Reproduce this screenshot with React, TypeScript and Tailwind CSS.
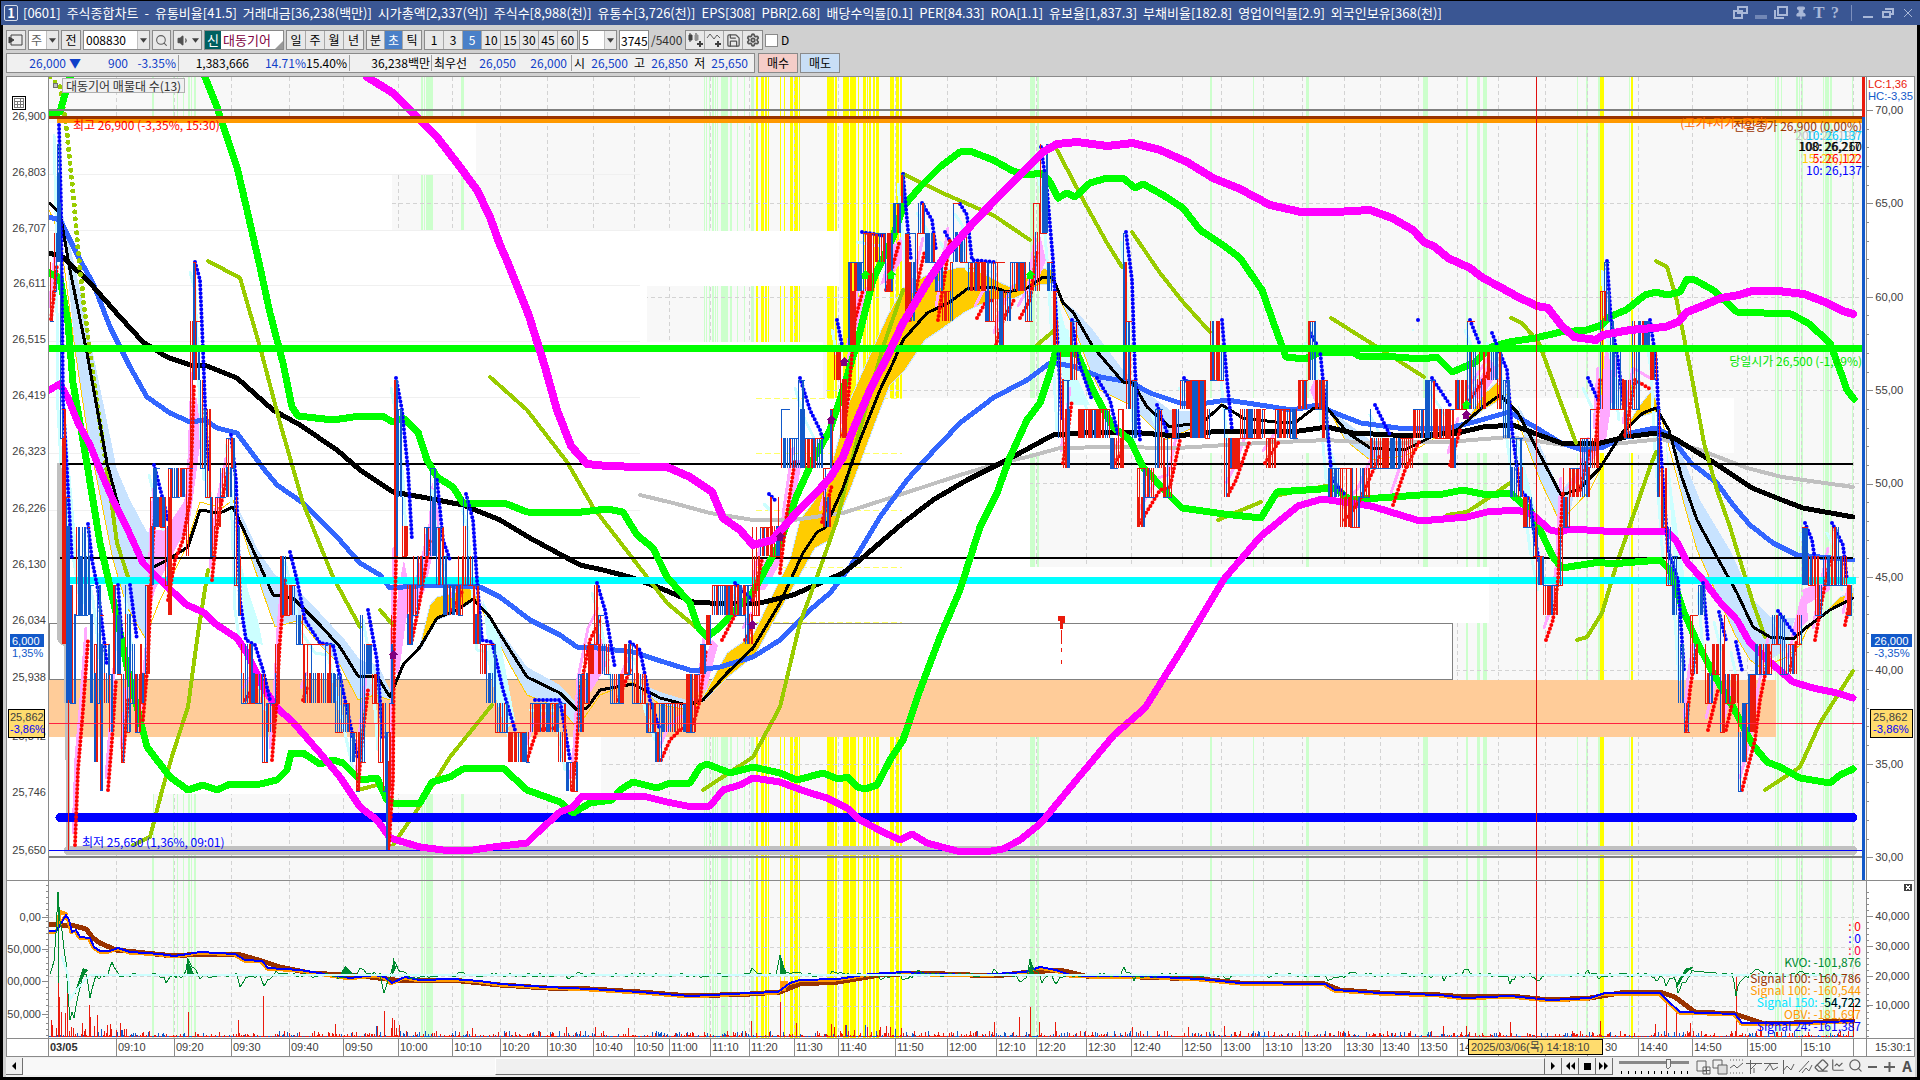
import { ReactNode } from "react";
import {
  Search,
  Volume1,
  Save,
  Settings,
  Pin,
  Eraser,
  ChartLine,
} from "lucide-react";

const FONT = "font-['Noto_Sans_CJK_KR',sans-serif]";
const AXIS_FONT = "font-['Liberation_Sans','Noto_Sans_CJK_KR',sans-serif] text-[11px]";

const TITLE = [
  "[0601]", "주식종합차트", "-", "유통비율[41.5]", "거래대금[36,238(백만)]", "시가총액[2,337(억)]",
  "주식수[8,988(천)]", "유통수[3,726(천)]", "EPS[308]", "PBR[2.68]", "배당수익률[0.1]", "PER[84.33]",
  "ROA[1.1]", "유보율[1,837.3]", "부채비율[182.8]", "영업이익률[2.9]", "외국인보유[368(천)]",
];

const RED = "#ea1a0c";
const BLUE = "#1259c9";
const GREEN = "#00ff00";
const MAGENTA = "#ff00ff";
const OLIVE = "#99cc00";

// small seeded generator so the chart is the same on every render
function seeded(seed: number) {
  let s = seed;
  return () => {
    s = (s * 1664525 + 1013904223) % 4294967296;
    return s / 4294967296;
  };
}

// ---------- shared x axis ----------
const TIMES: [number, string][] = [
  [116, "09:10"], [174, "09:20"], [231, "09:30"], [289, "09:40"], [343, "09:50"], [398, "10:00"], [452, "10:10"],
  [500, "10:20"], [547, "10:30"], [593, "10:40"], [634, "10:50"], [669, "11:00"], [710, "11:10"], [749, "11:20"],
  [794, "11:30"], [838, "11:40"], [895, "11:50"], [947, "12:00"], [996, "12:10"], [1036, "12:20"], [1086, "12:30"],
  [1131, "12:40"], [1182, "12:50"], [1221, "13:00"], [1263, "13:10"], [1302, "13:20"], [1344, "13:30"],
  [1380, "13:40"], [1418, "13:50"], [1457, "14"], [1498, ""], [1545, ""], [1587, ""], [1638, "14:40"],
  [1692, "14:50"], [1747, "15:00"], [1801, "15:10"], [1853, ""],
];

const LIGHT_STRIPES: [number, number][] = [
  [152, 2], [173, 1], [177, 1], [183, 1], [188, 2], [191, 1], [194, 2], [421, 2], [424, 1], [426, 7], [461, 3],
  [704, 1], [706, 1], [709, 1], [712, 2], [715, 1], [717, 1], [721, 7], [730, 2], [737, 1], [744, 1], [751, 3],
  [1030, 5], [1037, 2], [1210, 2], [1253, 1], [1306, 3], [1423, 5], [1466, 2], [1477, 3], [1483, 4], [1577, 1],
  [1586, 2], [1598, 2], [1629, 1], [1775, 1], [1777, 2], [1781, 1], [1796, 2], [1799, 1], [1801, 2], [1823, 1],
  [1825, 4], [1830, 2], [1852, 1],
];

const YELLOW_STRIPES: [number, number][] = [
  [756, 2], [761, 3], [765, 2], [768, 1], [780, 1], [784, 1], [790, 3], [794, 4], [799, 1], [827, 7], [835, 2],
  [843, 6], [850, 6], [858, 1], [863, 3], [867, 1], [869, 2], [873, 2], [876, 3], [890, 4], [896, 3], [900, 2],
  [1600, 4], [1631, 2],
];

function Stripes({ top, height }: { top: number; height: number }) {
  return (
    <g>
      {LIGHT_STRIPES.map(([x, w]) => (
        <rect key={x} x={x} y={top} width={w} height={height} fill="#ccffcc" />
      ))}
      {YELLOW_STRIPES.map(([x, w]) => (
        <rect key={x} x={x} y={top} width={w} height={height} fill="#ffff00" />
      ))}
    </g>
  );
}

function Grid({ top, bottom, rows }: { top: number; bottom: number; rows: number[] }) {
  return (
    <g stroke="#d3d3d3" strokeDasharray="4 3">
      {TIMES.map(([x]) => (
        <line key={x} x1={x + 0.5} x2={x + 0.5} y1={top} y2={bottom} />
      ))}
      {rows.map((y) => (
        <line key={y} x1={49} x2={1862} y1={y + 0.5} y2={y + 0.5} />
      ))}
    </g>
  );
}

// ---------- price panel data ----------
const PROFILE: [number, number, number][] = [
  [123, 51, 476], [174, 57, 392], [231, 55, 839], [286, 56, 647], [342, 56, 823], [398, 55, 1734], [453, 57, 1030],
  [510, 57, 1030], [567, 56, 1489], [737, 57, 601], [794, 56, 153],
];

const MAGENTA_UPPER =
  "367,77 393,93 420,120 437,137 457,163 477,190 490,217 500,245 508,263 529,316 545,367 557,410 571,446 587,464 607,466 640,467 667,467 690,477 712,492 723,518 740,530 753,545 772,540 783,528 797,512 817,492 830,478 843,457 853,430 870,390 887,357 903,323 927,283 947,253 973,223 1000,195 1027,168 1043,152 1057,144 1077,142 1107,146 1133,143 1160,150 1187,162 1213,178 1240,189 1270,205 1301,212 1335,212 1370,210 1392,218 1413,230 1424,242 1435,247 1448,258 1470,268 1483,278 1500,287 1518,297 1537,306 1548,308 1561,325 1574,337 1596,340 1603,335 1630,330 1665,327 1678,322 1687,312 1700,307 1721,298 1739,295 1752,291 1778,291 1804,294 1825,302 1843,311 1853,314";

const MAGENTA_LOWER =
  "49,390 60,384 68,398 78,423 90,445 100,470 113,500 127,528 143,563 160,580 187,605 203,612 217,625 237,638 247,653 263,687 277,708 293,722 320,753 340,777 360,807 377,820 390,838 420,847 443,850 473,850 493,847 527,843 537,833 560,812 573,807 582,796 607,797 643,796 667,802 687,806 710,806 723,790 740,785 753,778 780,782 807,792 827,798 847,808 860,820 883,832 900,840 912,834 927,843 957,851 985,852 1003,849 1020,840 1041,823 1078,778 1114,735 1145,708 1182,649 1224,579 1261,536 1298,506 1322,499 1371,506 1420,521 1467,517 1487,512 1517,510 1533,515 1550,530 1560,532 1570,529 1620,532 1667,531 1677,542 1687,562 1703,580 1720,602 1737,620 1750,643 1770,662 1793,682 1813,688 1837,693 1853,698";

const GREEN_UPPER =
  "205,77 217,107 227,137 237,167 247,210 260,267 270,313 283,363 292,407 298,416 333,420 360,416 382,416 393,422 403,418 418,432 427,460 437,477 453,487 463,503 507,504 527,512 573,513 607,509 623,512 637,535 653,548 667,577 690,603 698,627 707,637 720,627 737,608 753,592 780,543 797,495 813,460 830,430 843,390 857,343 873,280 893,237 903,207 920,187 940,167 960,152 970,151 993,160 1013,171 1027,175 1042,173 1050,182 1058,198 1067,193 1075,197 1090,183 1107,178 1123,178 1135,188 1143,184 1163,195 1183,208 1200,230 1223,245 1240,258 1262,290 1275,327 1286,357 1305,359 1318,353 1353,352 1359,356 1396,357 1422,359 1437,357 1452,372 1474,363 1491,347 1509,342 1535,338 1561,332 1587,330 1602,325 1609,317 1626,310 1645,295 1656,292 1667,295 1680,292 1687,279 1695,280 1713,290 1737,312 1791,314 1808,323 1830,343 1841,373 1847,390 1854,399";

const GREEN_LOWER =
  "49,273 60,278 68,323 73,383 80,423 88,470 100,543 117,617 127,667 147,747 170,777 188,790 203,785 217,790 230,784 260,784 277,780 287,770 291,753 303,753 320,764 333,760 343,763 360,780 377,778 387,800 393,803 420,803 432,782 450,777 463,769 503,768 527,790 560,802 573,813 590,803 612,800 620,790 633,782 657,788 670,783 690,783 700,767 707,764 730,773 753,767 780,773 797,780 823,773 838,779 848,777 857,787 865,789 877,785 890,760 903,740 920,690 940,637 960,590 980,527 997,493 1010,457 1027,420 1040,403 1050,373 1055,353 1077,353 1093,390 1113,427 1130,440 1143,467 1167,493 1182,508 1224,514 1261,518 1277,492 1335,488 1350,500 1420,495 1443,494 1463,490 1487,495 1510,493 1530,510 1540,530 1553,557 1562,568 1600,562 1610,564 1660,560 1670,570 1683,610 1697,642 1713,673 1733,707 1753,745 1767,762 1780,767 1800,778 1830,783 1840,775 1853,769";

const BLUE_MA =
  "49,217 60,220 80,260 93,283 110,327 130,367 147,397 170,413 190,422 205,420 217,428 237,433 263,468 277,485 303,503 337,537 360,563 380,575 390,588 430,585 480,587 500,597 530,620 560,635 577,647 597,648 633,652 667,663 693,671 720,667 753,657 780,640 810,610 830,593 850,567 880,517 907,480 923,462 960,423 993,398 1027,380 1050,363 1073,366 1100,377 1130,382 1150,393 1180,403 1207,403 1227,400 1260,405 1292,410 1318,405 1335,413 1361,423 1405,429 1448,428 1474,422 1509,412 1535,427 1561,443 1583,450 1604,447 1630,433 1656,428 1669,435 1691,463 1717,483 1733,505 1750,525 1773,543 1797,555 1820,557 1853,560";

const BLACK_SLOW =
  "49,253 63,257 90,283 120,317 143,342 167,357 190,365 207,366 237,378 273,410 300,425 337,450 360,470 393,492 427,498 463,505 500,520 530,538 580,565 603,570 630,577 660,588 693,602 727,604 760,603 793,595 843,573 860,560 903,523 933,500 967,480 1007,460 1053,435 1093,432 1130,432 1177,436 1220,431 1260,431 1292,432 1327,427 1353,433 1413,436 1457,433 1483,427 1513,425 1539,435 1561,443 1596,444 1626,437 1656,433 1674,438 1713,462 1752,488 1782,500 1803,508 1853,517";

const BLACK_FAST =
  "49,203 60,213 70,270 87,353 107,463 123,523 143,563 152,568 167,560 188,547 200,510 220,513 233,507 253,550 273,595 293,598 320,625 340,647 358,676 377,676 390,697 403,665 420,647 437,618 457,610 473,599 490,617 500,634 527,677 560,693 577,710 587,708 600,690 633,684 660,698 687,705 703,700 727,673 753,648 780,603 803,553 817,532 825,528 843,488 860,440 880,390 893,363 903,340 927,313 950,302 967,289 993,287 1007,292 1027,288 1043,277 1053,278 1063,303 1073,312 1093,347 1123,382 1133,383 1147,407 1170,427 1203,422 1222,405 1243,418 1283,423 1296,422 1314,408 1327,408 1348,433 1370,448 1405,450 1431,437 1457,430 1483,407 1500,395 1518,413 1539,453 1561,495 1578,490 1600,468 1622,433 1643,413 1656,408 1669,430 1681,475 1697,520 1717,557 1737,593 1753,627 1770,637 1793,639 1807,627 1830,610 1853,598";

const GRAY_MA =
  "640,495 673,503 710,513 753,520 793,520 843,513 893,497 960,475 1000,463 1027,457 1060,448 1110,447 1177,448 1260,443 1327,440 1370,443 1448,442 1509,437 1543,442 1570,446 1604,445 1661,439 1700,450 1747,468 1782,477 1853,487";

const OLIVE_LINES = [
  "107,470 117,543 130,583",
  "208,261 240,278 260,347 280,423 303,503 333,577 360,627",
  "133,845 150,837 163,787 173,753 188,707 197,640 208,570",
  "380,610 393,625",
  "358,790 377,785",
  "393,845 417,810 450,757 492,705",
  "490,377 527,410 567,462 593,507 647,577 667,603 703,633",
  "703,790 753,757 780,707 800,623 817,577 837,520 857,440 883,347 903,290",
  "903,174 947,195 993,215 1030,240",
  "1037,345 1055,330",
  "1057,150 1087,207 1107,243 1122,267",
  "1132,232 1160,273 1183,302 1210,332",
  "1218,520 1261,502",
  "1331,318 1374,345 1424,377",
  "1279,495 1331,485",
  "1447,515 1467,512 1490,497 1510,483",
  "1511,318 1522,323 1539,343 1561,403 1576,443",
  "1577,640 1587,637 1602,613 1617,563 1650,467 1656,452",
  "1656,261 1667,267 1676,297 1691,373 1704,443 1717,490 1730,527 1753,603 1765,637",
  "1765,790 1800,767 1820,723 1853,671",
];

const SKY_BANDS = [
  "62,210 80,290 117,470 130,500 147,532 188,530 165,562 152,570 145,638 127,607 113,560 97,480 87,430 75,350",
  "237,505 258,550 275,575 293,585 320,613 345,640 360,660 378,665 390,690 390,700 375,695 358,700 340,665 320,645 300,620 275,627 262,590 250,555",
  "480,600 500,630 527,667 560,685 583,710 577,728 560,708 527,695 510,665 490,625",
  "633,680 660,692 690,701 690,710 660,705",
  "1060,300 1075,310 1093,330 1123,370 1150,395 1170,410 1200,412 1190,430 1165,440 1150,425 1130,405 1100,390 1090,370 1075,330",
  "1327,408 1350,425 1370,440 1405,445 1405,455 1370,460 1345,440",
  "1518,405 1540,445 1555,480 1562,490 1578,470 1570,515 1560,522 1540,480 1525,440",
  "1669,430 1680,450 1700,500 1730,550 1753,600 1770,617 1795,618 1785,650 1760,667 1750,660 1735,635 1715,590 1697,550 1683,500",
];

const CYAN_BANDS = [
  "63,380 70,470 76,540 86,600 80,610 66,520",
  "200,400 207,420 212,500 206,500",
  "240,560 248,590 258,620 263,645 245,640",
  "483,600 500,640 515,720 505,730 490,670",
  "1055,290 1066,330 1078,380 1090,405 1065,405",
  "1325,430 1335,460 1342,490 1332,490",
  "1515,430 1528,480 1538,520 1528,520",
  "1665,430 1673,500 1685,580 1676,590",
];

const PINK_BANDS = [
  "148,620 152,530 165,530 185,500 190,440 196,395 202,430 190,520 170,560 155,590",
  "394,660 398,590 404,560 412,600 406,620 398,680",
  "410,600 428,530 432,480 440,520 425,590 412,615",
  "580,710 592,660 598,630 610,660 598,680",
  "698,690 706,655 712,640 718,645 706,690",
  "755,590 765,560 780,545 782,560 765,590",
  "784,520 796,460 802,460 792,520",
  "846,345 856,300 868,285 868,310 856,330 850,360",
  "880,285 895,245 902,235 902,260 890,280",
  "1030,280 1040,235 1046,260 1036,285",
  "1310,390 1316,375 1322,385 1318,410",
  "1470,395 1490,360 1500,370 1480,400",
  "1565,490 1580,470 1598,440 1605,350 1618,360 1606,440 1580,480",
  "1790,640 1800,600 1806,590 1808,620",
  "1802,590 1820,582 1830,560 1830,590 1806,605",
];

const GOLD_EDGES = [
  "49,210 60,235 75,350 87,430 97,480 113,560 127,607 145,638 160,600 185,550 200,502 222,508 233,500 250,555 262,590 275,627 300,620 320,645 340,665 358,700 375,695 390,700",
  "475,597 490,625 510,665 527,695 560,708 577,728 600,695 633,682 660,705 690,710 703,700",
  "1060,300 1075,330 1090,370 1100,390 1130,405 1150,425 1165,440 1200,425 1222,403",
  "1327,405 1345,440 1370,460 1405,456 1440,435",
  "1508,395 1525,440 1540,480 1560,522 1590,490 1610,450",
  "1658,405 1683,500 1697,550 1715,590 1735,635 1750,660 1760,667 1785,658 1800,645 1807,630 1825,612",
];

const GOLD_BANDS = [
  "420,645 430,605 437,597 457,592 470,583 477,598 457,612 437,620 420,650",
  "703,697 727,653 753,635 770,600 790,560 800,520 815,500 830,470 850,400 870,355 887,317 903,288 927,275 960,267 973,267 995,280 1010,287 1030,275 1045,268 1055,270 1055,283 1040,285 1015,298 990,300 965,312 940,330 925,340 905,370 890,385 880,410 865,450 850,490 830,540 815,548 800,575 780,610 755,655 727,678 703,702",
  "1457,432 1470,415 1483,395 1497,382 1508,395 1500,400 1483,410",
  "1622,433 1640,405 1652,390 1658,405 1656,412 1640,417",
  "1825,612 1840,597 1853,592 1853,600 1830,610",
];

const FALLING = [
  "59,125 61,204 63,400 72,560", "88,524 92,560 98,590 107,665", "118,585 122,640", "130,585 137,640",
  "154,465 163,500 168,520", "195,262 200,280 203,350 206,430 209,470",
  "231,435 236,480 240,600 246,640 255,645 263,670 270,700",
  "290,552 297,580 305,620 320,643 333,645 345,700 358,760", "368,610 377,660 383,740",
  "396,378 402,410 408,470 412,540", "437,480 443,540 450,560",
  "466,494 473,520 477,580 482,640 492,642 503,690 515,730", "535,700 560,700 570,760",
  "597,583 605,610 615,668", "630,642 640,650 650,700 660,730", "735,583 752,600", "769,494 775,500",
  "800,378 810,410 820,430 823,440", "837,320 843,350", "862,232 885,236", "903,174 907,220 911,260",
  "922,203 932,220 936,250", "945,232 955,250", "960,204 967,215 972,260 995,262", "1041,147 1047,190 1053,260 1062,420",
  "1072,320 1078,360 1092,400", "1097,378 1110,400 1118,435", "1126,232 1132,280 1135,370 1140,440",
  "1157,405 1168,435", "1184,378 1203,400", "1222,320 1227,380 1232,430", "1310,333 1320,350 1325,400 1332,480 1345,495",
  "1375,405 1390,435", "1432,378 1450,405", "1418,320 1418,320", "1470,320 1480,345", "1492,333 1507,370 1512,430 1520,490 1530,500 1535,540 1543,580",
  "1588,378 1598,400", "1607,261 1611,320 1618,360 1624,410", "1650,320 1656,360 1660,440 1668,550 1678,580 1684,670",
  "1703,583 1708,640", "1719,612 1726,640", "1736,642 1742,670", "1778,611 1795,635", "1805,523 1812,540 1815,560",
  "1832,523 1843,545 1847,580",
];

const RISING = [
  "51,319 54,295 57,265", "75,845 78,770 83,710 88,640", "108,790 112,740 116,680", "123,760 128,700",
  "143,720 148,660 153,540 156,500", "168,600 175,560 183,540 190,500 194,385", "212,580 218,520 228,470",
  "245,700 253,688", "272,760 276,710 280,640 285,580", "303,700 308,685", "358,790 362,740 368,690",
  "389,845 393,780 394,640 396,560", "412,640 420,600 430,540", "452,610 463,590", "527,760 537,730 555,728",
  "572,790 576,760 580,690 590,640 600,620", "618,700 630,670", "661,760 670,740 680,730 693,725 700,700 706,650",
  "722,640 735,615", "745,640 753,625", "753,600 762,560", "780,573 786,520 795,460", "822,522 832,485",
  "843,435 848,400 855,320 863,290", "886,290 900,240", "910,320 918,280 925,250", "938,320 950,240",
  "977,318 985,303 993,300", "996,345 1003,320 1015,298", "1020,318 1030,300 1037,250", "1063,463 1068,430 1072,400",
  "1115,463 1123,450", "1140,523 1160,490 1170,487 1180,440", "1228,495 1236,480 1250,440", "1265,463 1280,440",
  "1345,520 1360,500 1380,455", "1393,505 1405,470 1420,440", "1450,465 1460,430", "1470,400 1490,370",
  "1546,640 1553,620 1558,580 1563,490", "1580,490 1590,450", "1596,440 1600,380", "1625,435 1635,380 1652,390",
  "1686,730 1690,690 1696,650", "1708,730 1718,690", "1726,730 1733,700", "1742,790 1755,740 1760,700 1770,650",
  "1790,670 1797,640", "1815,640 1822,600 1830,560", "1845,625 1851,595",
];

// x, top and bottom of the traded range
const RANGE: [number, number, number][] = [
  [50, 260, 318], [54, 230, 300], [57, 147, 260], [60, 215, 430], [62, 410, 640], [66, 490, 690], [70, 600, 700],
  [76, 525, 610], [88, 524, 610], [90, 580, 700], [94, 640, 760], [97, 580, 700], [100, 610, 790], [104, 640, 700],
  [109, 670, 730], [113, 580, 670], [117, 610, 670], [121, 660, 760], [125, 580, 730], [130, 640, 700],
  [135, 670, 730], [140, 640, 700], [145, 580, 670], [150, 495, 580], [153, 465, 520], [160, 495, 525],
  [165, 495, 580], [168, 465, 610], [172, 465, 495], [180, 465, 495], [186, 465, 550], [190, 318, 465],
  [193, 262, 378], [196, 318, 378], [200, 378, 465], [205, 405, 495], [210, 495, 550], [215, 495, 525],
  [220, 465, 495], [226, 435, 495], [231, 435, 470], [234, 465, 580], [238, 520, 610], [241, 640, 700],
  [247, 640, 700], [255, 670, 700], [262, 670, 760], [268, 700, 730], [275, 640, 700], [280, 550, 610],
  [285, 550, 610], [290, 580, 610], [296, 610, 640], [303, 640, 700], [325, 640, 700], [335, 670, 730],
  [343, 700, 730], [350, 730, 760], [356, 730, 790], [360, 611, 760], [366, 640, 670], [372, 670, 700],
  [378, 670, 760], [383, 700, 800], [386, 740, 850], [389, 700, 790], [391, 610, 700], [394, 378, 560],
  [398, 405, 490], [402, 495, 550], [407, 580, 640], [413, 550, 610], [418, 553, 583], [424, 523, 553],
  [430, 465, 553], [436, 525, 583], [443, 553, 610], [450, 580, 610], [458, 550, 610], [463, 494, 580],
  [468, 550, 583], [473, 580, 640], [480, 640, 670], [486, 640, 700], [495, 700, 730], [500, 700, 730],
  [508, 730, 760], [526, 730, 760], [530, 700, 730], [550, 700, 730], [558, 700, 760], [566, 760, 790],
  [572, 760, 790], [578, 670, 730], [584, 640, 700], [590, 640, 670], [594, 583, 640], [598, 620, 670],
  [604, 640, 670], [610, 670, 700], [618, 670, 700], [624, 640, 670], [632, 640, 700], [640, 670, 700],
  [646, 700, 730], [655, 700, 760], [662, 700, 730], [675, 700, 730], [686, 670, 730], [695, 670, 700],
  [700, 640, 670], [706, 610, 640], [712, 583, 611], [735, 583, 611], [745, 583, 640], [752, 523, 611],
  [760, 523, 553], [770, 493, 553], [778, 493, 553], [781, 405, 463], [790, 435, 463], [798, 378, 463],
  [805, 435, 463], [815, 435, 463], [823, 463, 523], [830, 405, 463], [834, 350, 375], [840, 350, 435],
  [848, 260, 350], [855, 260, 290], [863, 232, 290], [875, 232, 260], [885, 232, 290], [893, 203, 232],
  [901, 174, 203], [905, 232, 320], [915, 232, 290], [918, 203, 232], [925, 232, 260], [935, 260, 290],
  [942, 290, 320], [950, 260, 320], [953, 203, 260], [960, 232, 260], [968, 260, 290], [975, 260, 300],
  [985, 260, 320], [995, 260, 345], [1005, 290, 320], [1010, 260, 290], [1025, 260, 320], [1033, 203, 290],
  [1040, 150, 232], [1047, 260, 290], [1053, 290, 350], [1058, 350, 435], [1063, 378, 463], [1070, 318, 380],
  [1078, 405, 435], [1103, 405, 435], [1110, 435, 463], [1118, 405, 463], [1123, 232, 380], [1126, 320, 405],
  [1132, 378, 435], [1137, 463, 523], [1145, 463, 500], [1155, 405, 463], [1163, 435, 495], [1172, 405, 435],
  [1180, 378, 405], [1190, 378, 435], [1205, 405, 435], [1210, 320, 378], [1217, 318, 378], [1224, 405, 495],
  [1230, 435, 463], [1240, 405, 435], [1262, 405, 435], [1266, 435, 463], [1275, 405, 435], [1290, 405, 435],
  [1298, 378, 405], [1308, 332, 378], [1315, 378, 405], [1322, 378, 435], [1328, 463, 495], [1340, 463, 523],
  [1350, 463, 523], [1360, 463, 495], [1370, 407, 463], [1380, 435, 463], [1400, 435, 463], [1413, 405, 435],
  [1425, 378, 435], [1435, 405, 435], [1450, 405, 463], [1455, 378, 405], [1467, 318, 405], [1475, 350, 405],
  [1487, 350, 380], [1497, 350, 405], [1503, 378, 435], [1510, 435, 495], [1523, 490, 523], [1533, 520, 553],
  [1538, 553, 583], [1543, 583, 611], [1552, 583, 611], [1558, 523, 580], [1563, 463, 523], [1570, 463, 490],
  [1580, 435, 490], [1590, 405, 463], [1600, 290, 405], [1604, 262, 320], [1610, 320, 405], [1616, 350, 405],
  [1624, 380, 435], [1632, 320, 405], [1640, 320, 350], [1650, 350, 380], [1657, 405, 495], [1661, 460, 523],
  [1666, 523, 583], [1672, 553, 611], [1678, 611, 700], [1684, 700, 730], [1690, 611, 670], [1698, 583, 611],
  [1705, 640, 700], [1712, 640, 670], [1720, 611, 730], [1725, 670, 700], [1735, 670, 700], [1738, 700, 790],
  [1742, 700, 760], [1748, 670, 730], [1755, 640, 670], [1765, 640, 670], [1772, 611, 640], [1780, 611, 670],
  [1788, 640, 670], [1797, 611, 640], [1802, 523, 583], [1808, 553, 583], [1815, 553, 611], [1823, 553, 583],
  [1832, 523, 583], [1840, 553, 583], [1847, 583, 625], [1852, 523, 560],
];

type Bar = { x: number; y: number; w: number; h: number; color: string };

function buildCandles(): Bar[] {
  const rand = seeded(8830);
  const bars: Bar[] = [];
  // snap to the 50 won tick
  const snap = (y: number) => Math.round(850 - Math.round((850 - y) / 29.4) * 29.4);
  for (let i = 0; i < RANGE.length - 1; i++) {
    const [x0, t0, b0] = RANGE[i];
    const [x1, t1] = RANGE[i + 1];
    const top = snap(t0);
    const bottom = Math.max(snap(b0), top + 29);
    bars.push({ x: x0, y: top, w: 1, h: bottom - top, color: t1 > t0 ? BLUE : RED });
    for (let x = x0; x < x1; x += 2) {
      const color = rand() < (t1 > t0 ? 0.6 : 0.4) ? BLUE : RED;
      const mid = bottom - top > 58 && rand() < 0.6;
      const y = mid ? top + 29 : top;
      bars.push({ x, y, w: rand() < 0.45 ? 2 : 1, h: bottom - y, color });
    }
    bars.push({ x: x0, y: rand() < 0.5 ? bottom : top, w: x1 - x0, h: 1, color: rand() < 0.5 ? BLUE : RED });
  }
  return bars;
}

const CANDLES = buildCandles();

const PRICE_LABELS: [number, string][] = [
  [116, "26,900"], [172, "26,803"], [228, "26,707"], [283, "26,611"], [339, "26,515"], [395, "26,419"],
  [451, "26,323"], [508, "26,226"], [564, "26,130"], [620, "26,034"], [677, "25,938"], [736, "25,842"],
  [792, "25,746"], [850, "25,650"],
];

const RATIO_LABELS: [number, string][] = [
  [110, "70,00"], [203, "65,00"], [297, "60,00"], [390, "55,00"], [483, "50,00"], [577, "45,00"],
  [670, "40,00"], [764, "35,00"], [857, "30,00"],
];

function Line({ points, color, width }: { points: string; color: string; width: number }) {
  return (
    <polyline points={points} fill="none" stroke={color} strokeWidth={width} strokeLinejoin="round" strokeLinecap="round" />
  );
}

function PriceAxis() {
  return (
    <svg viewBox="7 77 41 803" preserveAspectRatio="none" className={`w-full h-full ${AXIS_FONT}`} shapeRendering="crispEdges">
      <rect x="12.5" y="96.5" width="13" height="13" fill="#fff" stroke="#000" />
      <path d="M14.5 98.5h9v9h-9zM14.5 101.5h9M14.5 104.5h9M17.5 101v7M20.5 98v10" fill="none" stroke="#777" />
      {PRICE_LABELS.map(([y, t]) => (
        <text key={t} x="46" y={y + 4} textAnchor="end" fill="#404040">{t}</text>
      ))}
      <rect x="10" y="634" width="34" height="13" fill={BLUE} />
      <text x="12" y="645" fill="#fff">6,000</text>
      <text x="12" y="657" fill={BLUE}>1,35%</text>
      <rect x="8.5" y="709.5" width="36" height="28" fill="#ffdc6e" stroke="#000" />
      <text x="10" y="721" fill="#404040">25,862</text>
      <text x="10" y="733" fill="#0000ff">-3,86%</text>
    </svg>
  );
}

function RatioAxis() {
  const ticks: number[] = [];
  for (let i = 0; i <= 40; i++) ticks.push(Math.round(110 + i * 18.68));
  return (
    <svg viewBox="1867 77 46 803" preserveAspectRatio="none" className={`w-full h-full ${AXIS_FONT}`} shapeRendering="crispEdges">
      {ticks.map((y, i) => (
        <line key={y} x1="1867" x2={i % 5 === 0 ? 1873 : 1869} y1={y + 0.5} y2={y + 0.5} stroke="#8a8a8a" />
      ))}
      <text x="1868" y="88" fill={RED}>LC:1,36</text>
      <text x="1868" y="100" fill={BLUE}>HC:-3,35</text>
      {RATIO_LABELS.map(([y, t]) => (
        <text key={t} x="1875" y={y + 4} fill="#404040">{t}</text>
      ))}
      <rect x="1871" y="634" width="40" height="13" fill={BLUE} />
      <text x="1874" y="645" fill="#fff">26,000</text>
      <text x="1874" y="657" fill={BLUE}>-3,35%</text>
      <rect x="1870.5" y="709.5" width="41" height="28" fill="#ffdc6e" stroke="#000" />
      <text x="1873" y="721" fill="#404040">25,862</text>
      <text x="1873" y="733" fill="#0000ff">-3,86%</text>
    </svg>
  );
}

function Arrow({ x, y, color }: { x: number; y: number; color: string }) {
  return <path d={`M${x} ${y - 5}l5 5h-2v4h-6v-4h-2z`} fill={color} />;
}

function PricePlot() {
  return (
    <svg viewBox="49 77 1817 803" preserveAspectRatio="none" className={`w-full h-full bg-[#f8f8f8] ${FONT} text-[12px]`} shapeRendering="crispEdges">
      <Stripes top={77} height={803} />
      <Grid top={77} bottom={880} rows={[203, 297, 390, 483, 577, 670, 764]} />
      {PROFILE.map(([y, h, right]) => (
        <rect key={y} x="49" y={y} width={right - 49} height={h} fill="#fff" />
      ))}
      <g stroke="#f0f0f0">
        {PRICE_LABELS.slice(1, 8).map(([y]) => (
          <line key={y} x1="49" x2="640" y1={y + 2.5} y2={y + 2.5} />
        ))}
      </g>
      <g stroke="#ffff66" strokeDasharray="6 3">
        {[398, 453, 510, 567, 622].map((y) => (
          <line key={y} x1="756" x2="902" y1={y + 0.5} y2={y + 0.5} />
        ))}
      </g>
      <rect x="49" y="623" width="1403" height="56" fill="#fff" stroke="#808080" />
      <rect x="49" y="680" width="1727" height="57" fill="#ffcc99" />

      {SKY_BANDS.map((p) => <polygon key={p} points={p} fill="#c8e3ff" />)}
      {GOLD_BANDS.map((p) => <polygon key={p} points={p} fill="#ffcc00" stroke="#c8e3ff" />)}
      {GOLD_EDGES.map((p) => <Line key={p} points={p} color="#ffcc00" width={1} />)}
      {CYAN_BANDS.map((p) => <polygon key={p} points={p} fill="#ccffff" />)}
      {PINK_BANDS.map((p) => <polygon key={p} points={p} fill="#ffa8ff" />)}
      <g transform="translate(-5 10)">
        {FALLING.map((p) => <Line key={p} points={p} color="#ccffff" width={3} />)}
      </g>
      <g transform="translate(-2 -12)">
        {RISING.map((p) => <Line key={p} points={p} color="#ffa8ff" width={3} />)}
      </g>

      <Line points="59,465 60,640 66,645 68,760 68,850" color="#c0c0c0" width={5} />
      <Line points={GRAY_MA} color="#c0c0c0" width={4} />
      <Line points={BLUE_MA} color="#3366ff" width={5} />
      <Line points={BLACK_SLOW} color="#000" width={5} />
      <polyline points="50,77 60,87 67,133 73,193 80,270 87,330 97,403 107,470" fill="none" stroke={OLIVE} strokeWidth="5" strokeDasharray="0 7" strokeLinecap="round" />
      {OLIVE_LINES.map((p) => <Line key={p} points={p} color={OLIVE} width={4} />)}
      <Line points={BLACK_FAST} color="#000" width={3} />

      {/* level lines */}
      <line x1="60" x2="1853" y1="464" y2="464" stroke="#000" strokeWidth="2" />
      <line x1="60" x2="1853" y1="558" y2="558" stroke="#000" strokeWidth="2" />
      <line x1="62" x2="1856" y1="580.5" y2="580.5" stroke="#00ffff" strokeWidth="7" />
      <Line points="60,817.5 1853,817.5" color="#0000ff" width={9} />
      <Line points="68,850.5 1853,850.5" color="#c0c0c0" width={9} />
      <line x1="49" x2="1862" y1="850.5" y2="850.5" stroke="#0000ff" />
      <line x1="49" x2="1862" y1="857" y2="857" stroke="#808080" strokeWidth="2" />

      <Line points={GREEN_LOWER} color={GREEN} width={7} />
      <Line points={GREEN_UPPER} color={GREEN} width={7} />
      <Line points="49,112 60,112 64,98 70,78" color={GREEN} width={7} />
      <Line points={MAGENTA_LOWER} color={MAGENTA} width={7} />

      <g fill="none" strokeWidth="4" strokeDasharray="0 4" strokeLinecap="round" shapeRendering="auto">
        {FALLING.map((p) => <polyline key={p} points={p} stroke="#0000ff" />)}
        {RISING.map((p) => <polyline key={p} points={p} stroke="#ff0000" />)}
      </g>
      {CANDLES.map((b, i) => (
        <rect key={i} x={b.x} y={b.y} width={b.w} height={b.h} fill={b.color} />
      ))}
      <rect x="68" y="700" width="1" height="150" fill={RED} />
      <rect x="100" y="700" width="1" height="90" fill={RED} />
      <path d="M1058 616h6v6h-2v6h-2v-8h-2zM1061 630v14M1061 648v4M1061 660v4" fill={RED} stroke={RED} />

      <line x1="49" x2="1862" y1="348.5" y2="348.5" stroke={GREEN} strokeWidth="7" />
      <Line points={MAGENTA_UPPER} color={MAGENTA} width={8} />
      <line x1="49" x2="1862" y1="110" y2="110" stroke="#808080" strokeWidth="2" />
      <line x1="49" x2="1862" y1="117.5" y2="117.5" stroke="#993300" strokeWidth="3" />
      <line x1="57" x2="1862" y1="121" y2="121" stroke="#ff9900" strokeWidth="4" />

      <Arrow x={393} y={655} color="#800080" />
      <Arrow x={752} y={625} color="#800080" />
      <Arrow x={780} y={537} color="#800080" />
      <Arrow x={831} y={420} color="#800080" />
      <Arrow x={844} y={362} color="#800080" />
      <Arrow x={1466} y={415} color="#800080" />
      <Arrow x={865} y={275} color={GREEN} />
      <Arrow x={891} y={275} color={GREEN} />
      <Arrow x={1030} y={275} color={GREEN} />
      <Arrow x={1466} y={405} color={GREEN} />

      <text x="73" y="130" fill="#ff0000">최고 26,900 (-3,35%, 15:30)</text>
      <text x="82" y="847" fill="#0000ff">최저 25,650 (1,36%, 09:01)</text>
      <g textAnchor="end">
        <text x="1768" y="128" fill="#ff6600">(고가+저가+종가)</text>
        <text x="1862" y="131" fill="#993300">전일종가 26,900 (0,00%)</text>
        <text x="1858" y="140" fill="#c0c0c0">200: 26,197</text>
        <text x="1862" y="140" fill="#00ccff">10: 26,137</text>
        <text x="1862" y="151" fill="#000">100: 26,260</text>
        <text x="1861" y="151" fill="#000">108: 26,217</text>
        <text x="1858" y="163" fill="#ffcc00">15: 26,117</text>
        <text x="1862" y="163" fill="#ff0000">5: 26,122</text>
        <text x="1862" y="175" fill="#0000ff">10: 26,137</text>
        <text x="1862" y="366" fill="#00e600">당일시가 26,500 (-1,49%)</text>
      </g>

      <line x1="49" x2="1862" y1="723.5" y2="723.5" stroke="#ff2040" />
      <line x1="1536.5" x2="1536.5" y1="77" y2="880" stroke="#e01010" />
      <rect x="1862" y="77" width="3" height="40" fill={RED} />
      <rect x="1862" y="117" width="3" height="763" fill={BLUE} />
    </svg>
  );
}

// ---------- volume panel ----------
const OBV_SLOW =
  "49,924 75,926 86,929 92,937 100,943 116,950 145,953 174,956 200,954 237,954 255,959 265,962 280,967 310,973 343,975 370,977 395,980 452,980 500,985 547,988 590,989 640,992 690,996 750,994 780,992 800,984 838,982 880,975 920,973 995,976 1030,972 1060,970 1085,976 1140,977 1200,979 1240,983 1325,984 1340,990 1380,993 1440,995 1465,997 1510,996 1550,1000 1590,998 1620,993 1660,992 1675,997 1695,1012 1735,1014 1765,1024 1853,1021";

const OBV_FAST =
  "49,931 56,931 60,925 66,915 69,920 72,932 76,930 80,937 90,938 94,947 100,951 110,951 118,948 130,952 160,954 174,956 188,954 200,952 235,954 245,960 262,961 268,968 300,970 350,978 375,975 385,977 392,983 405,977 420,980 452,979 480,981 500,984 547,987 590,989 640,992 690,996 750,993 778,992 790,983 800,980 838,979 870,974 905,972 930,974 980,975 1025,972 1040,967 1056,970 1070,975 1090,976 1140,976 1200,979 1240,983 1325,984 1335,990 1380,993 1440,995 1465,998 1510,996 1550,1000 1590,998 1605,993 1660,993 1668,1001 1680,1012 1735,1014 1742,1023 1800,1023 1853,1021";

const VOLUME_PEAKS: Record<number, number> = {
  51: 17, 58: 67, 59: 40, 61: 25, 65: 24, 67: 60, 82: 14, 89: 32, 90: 20, 97: 22, 110: 13, 120: 14, 188: 25, 238: 17, 263: 41,
  335: 13, 384: 26, 392: 19, 394: 17, 472: 9, 566: 10, 595: 10, 628: 9, 751: 16, 780: 35, 796: 14, 831: 13, 845: 12,
  880: 10, 901: 9, 994: 15, 1019: 20, 1030: 30, 1039: 15, 1055: 15, 1132: 10, 1188: 10, 1224: 11, 1443: 11, 1466: 11,
  1510: 15, 1536: 17, 1600: 16, 1655: 13, 1666: 34, 1676: 24, 1690: 14, 1736: 60, 1760: 14, 1853: 34,
};

function buildVolume(): Bar[] {
  const rand = seeded(601);
  const bars: Bar[] = [];
  for (let x = 49; x < 1854; x++) {
    const busy = x < 130 || (x > 375 && x < 400) || (x > 830 && x < 900) ? 2 : 1;
    const h = VOLUME_PEAKS[x] ?? 1 + Math.floor(rand() ** 4 * 6 * busy);
    bars.push({ x, y: 1037 - h, w: 1, h, color: rand() < 0.65 || VOLUME_PEAKS[x] ? RED : BLUE });
  }
  return bars;
}

const VOLUME = buildVolume();

// x, offset from the zero line, width of the decay
const KVO_SPIKES: [number, number, number][] = [
  [54, -14, 5], [58, -78, 3], [62, -20, 4], [69, 60, 4], [74, 26, 7], [83, -12, 6], [90, 24, 5], [95, -9, 3], [111, -15, 6],
  [120, 6, 3], [166, 7, 5], [188, -15, 6], [200, 5, 6], [239, 13, 5], [263, 15, 5], [275, -5, 8], [337, 5, 5], [360, -9, 7], [384, 20, 3], [393, -19, 4],
  [410, 4, 10], [460, -4, 5], [568, 5, 6], [575, -4, 6], [751, -8, 5], [780, -22, 4], [796, -5, 4], [832, -5, 6], [882, 5, 5], [903, 6, 6],
  [918, -5, 6], [994, -6, 3], [1019, 10, 4], [1030, -16, 4], [1041, 10, 4], [1056, 9, 4], [1123, -8, 5], [1133, 6, 4],
  [1225, 5, 5], [1328, 6, 10], [1350, -4, 10], [1443, 5, 4], [1466, -7, 4], [1510, 8, 4], [1537, 7, 5], [1587, -5, 4],
  [1600, 5, 4], [1656, 8, 3], [1666, 12, 4], [1678, 17, 7], [1692, -9, 12], [1736, 20, 4], [1755, -6, 12], [1800, -4, 8],
];

function buildKvo(): string {
  const rand = seeded(42);
  const points: string[] = [];
  for (let x = 50; x < 1853; x += 2) {
    let y = 975 + (rand() - 0.5) * 4;
    for (const [sx, amp, decay] of KVO_SPIKES) {
      const d = x - sx;
      if (d > -3 && d < decay * 4) y += d < 0 ? amp * 0.4 : amp * Math.exp(-d / decay);
    }
    points.push(`${x},${Math.round(Math.min(1036, Math.max(892, y)))}`);
  }
  return points.join(" ");
}

const KVO = buildKvo();

function VolumePlot() {
  return (
    <svg viewBox="49 881 1817 157" preserveAspectRatio="none" className={`w-full h-full bg-[#f8f8f8] ${FONT} text-[12px]`} shapeRendering="crispEdges">
      <Stripes top={881} height={157} />
      <Grid top={881} bottom={1038} rows={[917, 947, 976, 1006]} />
      {VOLUME.map((b) => (
        <rect key={b.x} x={b.x} y={b.y} width={b.w} height={b.h} fill={b.color} />
      ))}
      <Line points={OBV_SLOW} color="#993300" width={5} />
      <g transform="translate(-1 1)">
        <Line points={OBV_FAST} color="#ff9900" width={3} />
      </g>
      <Line points="58,925 60,912 66,914" color="#ff9900" width={4} />
      <path d="M780 981h8l-2 10h-6z" fill="#ff9900" />
      <Line points={OBV_FAST} color="#0000ff" width={2} />
      <Line points={KVO} color="#008a30" width={1} />
      <rect x="58" y="893" width="1" height="90" fill="#008a30" />
      <path d="M75 992l8-24 5 2-6 8-7 17zM187 957l3 8 4 9h-7zM340 975l5-9 8 7-6 3zM393 956l3 12-4 8zM1676 984l10-16 8-1-9 7-8 14zM780 953l3 12 4 10h-7zM1030 960l4 14h-5z" fill="#008a30" />
      <Line points="118,975 1853,975" color="#ccffff" width={2} />
      <Line points="62,957 68,975 70,1000 76,990 90,975 118,975" color="#ccffff" width={2} />
      <g textAnchor="end">
        <text x="1861" y="931" fill="#ff0000">: 0</text>
        <text x="1861" y="943" fill="#0000ff">: 0</text>
        <text x="1861" y="955" fill="#ff0040">: 0</text>
        <text x="1861" y="967" fill="#008a30">KVO: -101,876</text>
        <text x="1861" y="983" fill="#993300">Signal 100: -160,786</text>
        <text x="1861" y="995" fill="#ff9900">Signal 100: -160,544</text>
        <text x="1861" y="1007" fill="#00e5ff">Signal 150: -54,722</text>
        <text x="1861" y="1007" fill="#000">54,722</text>
        <text x="1861" y="1019" fill="#ff9900">OBV: -181,697</text>
        <text x="1861" y="1031" fill="#0000ff">Signal 24: -161,387</text>
      </g>
      <line x1="1536.5" x2="1536.5" y1="881" y2="1038" stroke="#e01010" />
    </svg>
  );
}

function VolumeAxis() {
  const labels: [number, string][] = [[917, "0,00"], [949, "50,000"], [981, "00,000"], [1014, "50,000"]];
  const ticks: number[] = [];
  for (let y = 885; y < 1036; y += 6) ticks.push(y);
  return (
    <svg viewBox="7 881 41 157" preserveAspectRatio="none" className={`w-full h-full ${AXIS_FONT}`} shapeRendering="crispEdges">
      {ticks.map((y) => (
        <line key={y} x1="46" x2="48" y1={y + 0.5} y2={y + 0.5} stroke="#8a8a8a" />
      ))}
      {labels.map(([y, t]) => (
        <g key={y}>
          <line x1="42" x2="48" y1={y + 0.5} y2={y + 0.5} stroke="#8a8a8a" />
          <text x="41" y={y + 4} textAnchor="end" fill="#404040">{t}</text>
        </g>
      ))}
    </svg>
  );
}

function CountAxis() {
  const labels: [number, string][] = [[916, "40,000"], [946, "30,000"], [976, "20,000"], [1005, "10,000"]];
  const ticks: number[] = [];
  for (let y = 892; y < 1038; y += 6) ticks.push(y);
  return (
    <svg viewBox="1867 881 46 157" preserveAspectRatio="none" className={`w-full h-full ${AXIS_FONT}`} shapeRendering="crispEdges">
      {ticks.map((y) => (
        <line key={y} x1="1867" x2="1869" y1={y + 0.5} y2={y + 0.5} stroke="#8a8a8a" />
      ))}
      {labels.map(([y, t]) => (
        <g key={y}>
          <line x1="1867" x2="1873" y1={y + 0.5} y2={y + 0.5} stroke="#8a8a8a" />
          <text x="1875" y={y + 4} fill="#404040">{t}</text>
        </g>
      ))}
      <rect x="1903" y="884" width="8" height="7" fill="#404040" />
      <path d="M1905 885.5l4 4M1909 885.5l-4 4" stroke="#fff" />
    </svg>
  );
}

function TimeAxis() {
  return (
    <svg viewBox="49 1039 1817 17" preserveAspectRatio="none" className={`w-full h-full bg-white ${AXIS_FONT}`} shapeRendering="crispEdges">
      <text x="50" y="1051" fill="#303030" fontWeight="bold">03/05</text>
      {TIMES.map(([x, t]) => (
        <g key={x}>
          <line x1={x + 0.5} x2={x + 0.5} y1="1039" y2="1056" stroke="#8a8a8a" />
          <text x={x + 2} y="1051" fill="#404040">{t}</text>
        </g>
      ))}
      <rect x="1468.5" y="1039.5" width="134" height="15" fill="#ffdc6e" stroke="#000" />
      <text x="1471" y="1051" fill="#404040">2025/03/06(목) 14:18:10</text>
      <text x="1605" y="1051" fill="#404040">30</text>
    </svg>
  );
}

// ---------- chrome ----------
function TitleBar() {
  return (
    <header className="flex items-center h-6 shrink-0 bg-[#3a5693] text-white text-[13px] pl-[3px] pr-1">
      <div className="w-[14px] h-4 mr-[5px] rounded-xs border border-white/80 flex items-center justify-center font-bold">1</div>
      <h1 className="flex gap-[6px] whitespace-nowrap font-normal">
        {TITLE.map((t) => <span key={t}>{t}</span>)}
      </h1>
      <div className="ml-auto flex items-center gap-1 text-[#a9b8d8]">
        <div className="flex items-center gap-1 mr-[2px]">
          <WinButton label="새 창"><path d="M5 2h9v6H5zM1 6h8v7H1z" fill="#3a5693" strokeWidth="2" /></WinButton>
          <WinButton label="접기"><path d="M2 11h12M2 13h12" /></WinButton>
          <WinButton label="복사"><path d="M2 5v8h9M5 2h9v8H5z" strokeWidth="2" /></WinButton>
          <button aria-label="고정" className="w-4 h-4 flex items-center justify-center"><Pin size={14} fill="currentColor" /></button>
          <button aria-label="글꼴" className="w-3 font-['Liberation_Serif',serif] font-bold text-[17px]">T</button>
          <button aria-label="도움말" className="w-3 font-['Liberation_Serif',serif] font-bold text-[16px]">?</button>
        </div>
        <span className="w-px h-4 mx-1 bg-[#7d90bd]"></span>
        <WinButton label="최소화"><path d="M3 12h10" strokeWidth="2" /></WinButton>
        <WinButton label="이전 크기로"><path d="M5 4h8v5h-3M3 7h7v5H3z" strokeWidth="2" /></WinButton>
        <WinButton label="닫기"><path d="M4 4l8 8M12 4l-8 8" /></WinButton>
      </div>
    </header>
  );
}

function WinButton({ label, children }: { label: string; children: ReactNode }) {
  return (
    <button aria-label={label} className="w-4 h-4">
      <svg viewBox="0 0 16 16" className="w-4 h-4" fill="none" stroke="currentColor">{children}</svg>
    </button>
  );
}

const box = "h-5 border border-[#8a8a8a] bg-[#e8e8e8] flex items-center justify-center shrink-0";

function ButtonGroup({ items, active, width }: { items: string[]; active?: string; width: string }) {
  return (
    <div className="flex h-5 border border-[#8a8a8a] divide-x divide-[#a8a8a8] shrink-0">
      {items.map((t) => (
        <button key={t} className={`${width} ${t === active ? "bg-[#4a80c8] text-white" : "bg-[#e8e8e8]"}`}>{t}</button>
      ))}
    </div>
  );
}

function Combo({ value, label, width }: { value: string; label: string; width: string }) {
  return (
    <div className={`relative h-5 border border-[#8a8a8a] bg-white shrink-0 ${width}`}>
      <select aria-label={label} className="appearance-none w-full h-full pl-[2px] bg-transparent outline-none">
        <option>{value}</option>
      </select>
      <span className="absolute right-0 top-0 w-3 h-full bg-[#e8e8e8] border-l border-[#c0c0c0] flex items-center justify-center pointer-events-none">
        <Caret />
      </span>
    </div>
  );
}

function Caret() {
  return <svg viewBox="0 0 8 5" className="w-[7px] h-[5px]"><path d="M0 0h8L4 5z" fill="#404040" /></svg>;
}

function Toolbar() {
  return (
    <div className="flex items-center gap-[2px] h-5">
      <button aria-label="패널" className={`${box} w-[20px]`}>
        <svg viewBox="0 0 16 16" className="w-4 h-4" fill="none" stroke="#404040"><path d="M3 3h11v10H3z" /><path d="M1 5l5 3-5 3z" fill="#404040" /></svg>
      </button>
      <Combo value="주" label="구분" width="w-[31px] text-[#606060]" />
      <button className={`${box} w-[20px]`}>전</button>
      <Combo value="008830" label="종목코드" width="w-[67px]" />
      <button aria-label="검색" className={`${box} w-[19px] text-[#606060]`}><Search size={13} /></button>
      <button aria-label="소리" className={`${box} w-[29px] gap-[2px] text-[#505050]`}><Volume1 size={13} fill="currentColor" /><Caret /></button>
      <div className="relative h-5 w-[80px] border border-[#8a8a8a] bg-white flex items-center shrink-0 text-[13px]">
        <span className="w-4 h-[18px] bg-[#006060] text-white flex items-center justify-center">신</span>
        <span className="ml-[2px] text-[#800040]">대동기어</span>
        <svg viewBox="0 0 8 8" className="absolute right-0 bottom-0 w-2 h-2"><path d="M8 0v8H0z" fill="#999" /></svg>
      </div>
      <ButtonGroup items={["일", "주", "월", "년"]} width="w-[19px]" />
      <ButtonGroup items={["분", "초", "틱"]} active="초" width="w-[18px]" />
      <ButtonGroup items={["1", "3", "5", "10", "15", "30", "45", "60"]} active="5" width="w-[19px]" />
      <div className="flex gap-[2px] -ml-px">
        <Combo value="5" label="주기" width="w-[38px]" />
        <input aria-label="조회 개수" defaultValue="3745" className="h-5 w-[30px] pl-px border border-[#8a8a8a] bg-white shrink-0" />
      </div>
      <span className="w-[32px] text-[#303030]">/5400</span>
      <div className="flex h-5 border border-[#8a8a8a] divide-x divide-[#a8a8a8] shrink-0">
        <button aria-label="차트 추가" className="w-[19px] bg-[#e8e8e8] flex items-center justify-center">
          <svg viewBox="0 0 16 16" className="w-4 h-4" stroke="#404040" strokeWidth="1"><path d="M3 1v9M9 1v8" /><path d="M2 3h3v5H2z" fill="#404040" /><path d="M8 3h3v5H8z" fill="#909090" stroke="#909090" /><path d="M10 12h6M13 9v6" strokeWidth="2" /></svg>
        </button>
        <button aria-label="지표 추가" className="w-[19px] bg-[#e8e8e8] flex items-center justify-center">
          <svg viewBox="0 0 16 16" className="w-4 h-4" fill="none" stroke="#606060"><path d="M1 6l3-4 4 5 3-4 3 3" /><path d="M9 12h6M12 9v6" strokeWidth="2" stroke="#404040" /></svg>
        </button>
        <button aria-label="저장" className="w-[19px] bg-[#e8e8e8] flex items-center justify-center"><Save size={15} color="#555" /></button>
        <button aria-label="설정" className="w-[19px] bg-[#e8e8e8] flex items-center justify-center"><Settings size={14} color="#555" strokeWidth={3} /></button>
      </div>
      <label className="flex items-center gap-[3px]">
        <input type="checkbox" className="appearance-none w-[13px] h-[13px] bg-white border border-[#8a8a8a]" />D
      </label>
    </div>
  );
}

function Quote() {
  const blue = "text-[#1040c8] text-right";
  return (
    <div className="flex items-center h-5">
      <div className="flex h-full items-center w-[749px] shrink-0 border border-[#8a8a8a] bg-[#f0f0f0] divide-x divide-[#a0a0a0] whitespace-nowrap">
        <div className="flex items-center w-[172px] pr-[2px]">
          <span className={`${blue} w-[59px]`}>26,000</span>
          <span className={`${blue} w-[15px]`}>▼</span>
          <span className={`${blue} w-[47px]`}>900</span>
          <span className={`${blue} grow`}>-3.35%</span>
        </div>
        <div className="flex items-center w-[171px] pr-[2px]">
          <span className="w-[70px] text-right">1,383,666</span>
          <span className={`${blue} w-[57px]`}>14.71%</span>
          <span className="grow text-right">15.40%</span>
        </div>
        <div className="w-[82px] text-right pr-[1px]">36,238백만</div>
        <div className="flex items-center w-[140px] pl-[2px] pr-[4px]">
          <span>최우선</span>
          <span className={`${blue} grow`}>26,050</span>
          <span className={`${blue} w-[51px]`}>26,000</span>
        </div>
        <div className="flex items-center justify-between grow pl-[2px] pr-[6px]">
          <span>시</span><span className={blue}>26,500</span>
          <span>고</span><span className={blue}>26,850</span>
          <span>저</span><span className={blue}>25,650</span>
        </div>
      </div>
      <button className="ml-[3px] w-10 h-5 border border-[#8a8a8a] bg-[#f5cdc8] shrink-0">매수</button>
      <button className="ml-[2px] w-10 h-5 border border-[#8a8a8a] bg-[#c8def5] shrink-0">매도</button>
    </div>
  );
}

function ToolIcon({ label, children }: { label: string; children: ReactNode }) {
  return (
    <button aria-label={label} className="w-[17px] h-[17px] shrink-0 text-[#606060]">
      <svg viewBox="0 0 16 16" className="w-4 h-4" fill="none" stroke="currentColor">{children}</svg>
    </button>
  );
}

function Footer() {
  const btn = "w-[17px] h-[17px] shrink-0 bg-[#f0f0f0] border-r border-b border-[#707070] flex items-center justify-center";
  return (
    <footer className="flex items-start h-5 pt-px shrink-0 bg-[#f0f0f0]">
      <button aria-label="왼쪽으로" className={btn}><svg viewBox="0 0 8 8" className="w-2 h-2"><path d="M6 0v8L2 4z" /></svg></button>
      <div className="flex grow h-[17px] bg-[#f8f8f8]">
        <div className="w-[31%]"></div>
        <div className="grow bg-[#f0f0f0] border border-[#fff] border-r-[#707070] border-b-[#707070]"></div>
      </div>
      <button aria-label="재생" className={btn}><svg viewBox="0 0 8 8" className="w-2 h-2"><path d="M2 0v8l4-4z" /></svg></button>
      <button aria-label="뒤로" className={btn}><svg viewBox="0 0 10 8" className="w-[10px] h-2"><path d="M5 0v8L1 4zM10 0v8L6 4z" /></svg></button>
      <button aria-label="정지" className={btn}><span className="w-[7px] h-[7px] bg-black"></span></button>
      <button aria-label="앞으로" className={btn}><svg viewBox="0 0 10 8" className="w-[10px] h-2"><path d="M0 0v8l4-4zM5 0v8l4-4z" /></svg></button>
      <div className="relative w-[70px] h-[17px] mx-[6px] shrink-0">
        <input aria-label="간격" type="range" defaultValue={70} className="absolute inset-0 w-full opacity-0" />
        <svg viewBox="0 0 70 17" className="w-full h-full pointer-events-none" shapeRendering="crispEdges">
          <path d="M0 4.5h70" stroke="#888" strokeWidth="3" />
          <path d="M2.5 13v3M9.5 13v3M16.5 13v3M22.5 13v3M29.5 13v3M35.5 13v3M42.5 13v3M48.5 13v3M55.5 13v3M62.5 13v3M68.5 13v3" stroke="#000" />
          <path d="M47 1h4v8l-2 2-2-2z" fill="#f0f0f0" stroke="#707070" />
        </svg>
      </div>
      <ToolIcon label="추가"><path d="M2 2h9v10H2zM8 8h7v7H8zM8 11.5h7M11.5 8v7" /></ToolIcon>
      <ToolIcon label="겹치기"><path d="M1 1h9v8H1z" /><path d="M6 6h9v9H6z" fill="#ddd" /></ToolIcon>
      <ToolIcon label="영역"><path d="M1 1h14M1 14h14" strokeDasharray="1 2" /><path d="M1 9l4-3 3 3 6-5" /></ToolIcon>
      <ToolIcon label="기준선"><path d="M0 4.5h16M4.5 1v14M5 10l5-5M8 9v5" /></ToolIcon>
      <ToolIcon label="수평선"><path d="M1 4.5h14M2 12l5-7 3 6 5-3" /></ToolIcon>
      <ToolIcon label="수직선"><path d="M3.5 1v14M3 12l4-5 4 4 3-6" /></ToolIcon>
      <ToolIcon label="추세선"><path d="M2 13L12 2M5 14l4-5 3 3 3-6" /></ToolIcon>
      <button aria-label="모두 지우기" className="w-[17px] shrink-0 text-[#606060]"><Eraser size={15} /></button>
      <button aria-label="차트 복사" className="w-[17px] shrink-0 text-[#606060]"><ChartLine size={14} /></button>
      <button aria-label="확대경" className="w-[17px] shrink-0 text-[#606060]"><Search size={15} /></button>
      <ToolIcon label="축소"><path d="M3 8h9" strokeWidth="2" /></ToolIcon>
      <ToolIcon label="확대"><path d="M2 8h11M7.5 3v10" strokeWidth="2" /></ToolIcon>
      <button aria-label="자동" className="w-4 shrink-0 font-bold text-[15px] text-[#505050]">A</button>
    </footer>
  );
}

export default function App() {
  return (
    <div className={`h-screen min-h-[600px] flex flex-col overflow-hidden bg-black pt-px pl-px pb-[3px] text-[12px] leading-4 text-black ${FONT}`}>
      <TitleBar />
      <div className="flex flex-col flex-1 min-h-0 ml-[2px] mr-[3px] pl-[3px] pr-[2px] bg-[#d0d0d0]">
        <div className="flex flex-col gap-[3px] pt-[5px] pb-[3px]">
          <Toolbar />
          <Quote />
        </div>
        <main className="flex-1 min-h-0 grid grid-cols-[42px_1fr_48px] grid-rows-[804fr_157fr_19px] bg-white border-t border-x border-[#8a8a8a]">
          <div className="min-h-0 border-b border-r border-[#8a8a8a]"><PriceAxis /></div>
          <div className="relative min-h-0 border-b border-[#8a8a8a]">
            <PricePlot />
            <div className="absolute left-1 top-px flex items-center gap-1">
              <span className="w-[5px] h-[5px] bg-[#c0c0c0] border border-[#707070]"></span>
              <span className="px-[3px] h-[15px] leading-[13px] bg-[#f0f0f0] border border-[#b0b0b0] text-[#303030]">대동기어 매물대 수(13)</span>
            </div>
          </div>
          <div className="min-h-0 border-b border-l border-[#8a8a8a]"><RatioAxis /></div>
          <div className="min-h-0 border-r border-[#8a8a8a]"><VolumeAxis /></div>
          <div className="min-h-0"><VolumePlot /></div>
          <div className="min-h-0 border-l border-[#8a8a8a]"><CountAxis /></div>
          <div className="border-y border-r border-[#8a8a8a]"></div>
          <div className="min-h-0 border-y border-[#8a8a8a]"><TimeAxis /></div>
          <div className={`border-y border-l border-[#8a8a8a] pl-2 text-[#404040] whitespace-nowrap ${AXIS_FONT}`}>15:30:1</div>
        </main>
        <Footer />
      </div>
    </div>
  );
}
